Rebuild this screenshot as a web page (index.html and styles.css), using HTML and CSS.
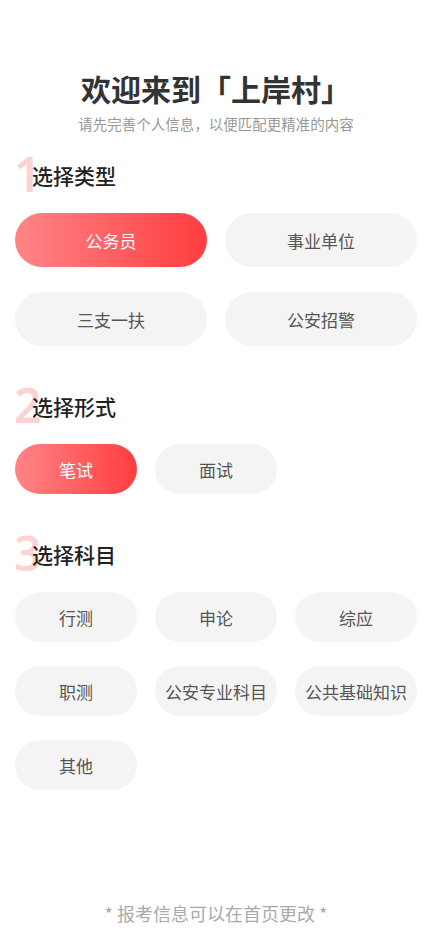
FILE: index.html
```html
<!DOCTYPE html>
<html lang="zh-CN">
<head>
    <meta charset="UTF-8">
    <meta name="viewport" content="width=device-width, initial-scale=1.0">
    <title>欢迎来到上岸村</title>
    <link rel="stylesheet" href="styles.css">
</head>
<body>
    <div class="page">
        <div class="header">
            <h1>欢迎来到「上岸村」</h1>
            <p class="subtitle">请先完善个人信息，以便匹配更精准的内容</p>
        </div>

        <div class="section">
            <h2 class="section-title"><span class="num">1</span><span class="label">选择类型</span></h2>
            <div class="options cols-2">
                <div class="option active">公务员</div>
                <div class="option">事业单位</div>
                <div class="option">三支一扶</div>
                <div class="option">公安招警</div>
            </div>
        </div>

        <div class="section">
            <h2 class="section-title"><span class="num">2</span><span class="label">选择形式</span></h2>
            <div class="options cols-3 small">
                <div class="option active">笔试</div>
                <div class="option">面试</div>
            </div>
        </div>

        <div class="section">
            <h2 class="section-title"><span class="num">3</span><span class="label">选择科目</span></h2>
            <div class="options cols-3 small">
                <div class="option">行测</div>
                <div class="option">申论</div>
                <div class="option">综应</div>
                <div class="option">职测</div>
                <div class="option">公安专业科目</div>
                <div class="option">公共基础知识</div>
                <div class="option">其他</div>
            </div>
        </div>

        <p class="footer">* 报考信息可以在首页更改 *</p>
    </div>
</body>
</html>
```

FILE: styles.css
```css
body {
    margin: 0;
    background: #fff;
    font-family: "Noto Sans CJK SC", "Noto Sans", sans-serif;
    color: #333;
}

.page {
    min-height: 941px;
    box-sizing: border-box;
    display: flex;
    flex-direction: column;
    padding: 69px 15px 16px;
}

.header {
    text-align: center;
}

.header h1 {
    margin: 0;
    font-size: 30px;
    line-height: 38px;
    font-weight: bold;
    color: #333;
}

.subtitle {
    margin: 7px 0 0;
    font-size: 14.5px;
    line-height: 20px;
    color: #999;
}

.section {
    margin-top: 26px;
}

.section + .section {
    margin-top: 45px;
}

.section-title {
    position: relative;
    margin: 0;
    padding-left: 17px;
    font-size: 21px;
    line-height: 30px;
    font-weight: 500;
    color: #222;
}

.section-title .num {
    position: absolute;
    left: -1px;
    top: -10px;
    font-family: "Noto Sans", sans-serif;
    font-size: 48px;
    line-height: 48px;
    font-weight: 600;
    color: #fcd3d4;
}

.section-title .label {
    position: relative;
}

.options {
    display: grid;
    column-gap: 18px;
    row-gap: 25px;
    margin-top: 23px;
}

.cols-2 {
    grid-template-columns: repeat(2, 1fr);
}

.cols-3 {
    grid-template-columns: repeat(3, 1fr);
}

.small {
    row-gap: 24px;
}

.option {
    height: 54px;
    border-radius: 27px;
    background: #f4f4f4;
    color: #555;
    font-size: 17px;
    display: flex;
    align-items: center;
    justify-content: center;
    white-space: nowrap;
}

.small .option {
    height: 50px;
    border-radius: 25px;
}

.option.active {
    background: linear-gradient(to right, #ff8587, #ff3d3f);
    color: #fff;
}

.footer {
    margin: auto 0 0;
    text-align: center;
    font-size: 18px;
    line-height: 24px;
    color: #aaa;
}
```
